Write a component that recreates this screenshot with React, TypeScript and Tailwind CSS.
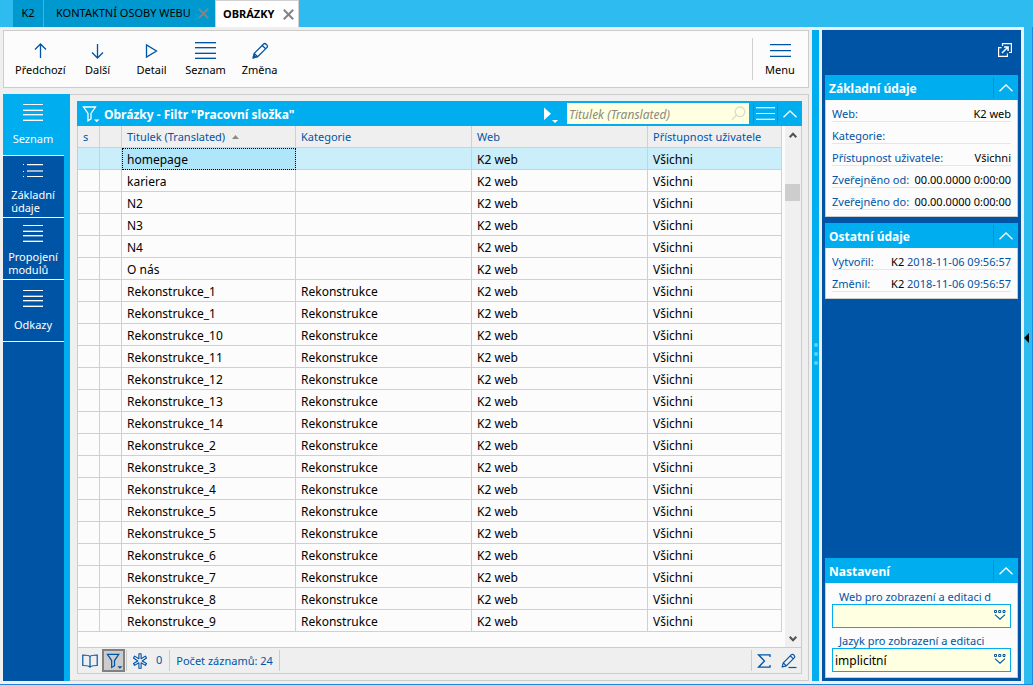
import React from "react";

type Row = { title: string; category: string };

const plainTitles = ["homepage", "kariera", "N2", "N3", "N4", "O nás"];
const projectNumbers = [1, 1, 10, 11, 12, 13, 14, 2, 3, 4, 5, 5, 6, 7, 8, 9];

const rows: Row[] = [
  ...plainTitles.map((title) => ({ title, category: "" })),
  ...projectNumbers.map((n) => ({ title: `Rekonstrukce_${n}`, category: "Rekonstrukce" })),
];

function ArrowUp() {
  return (
    <svg width="21" height="20" viewBox="0 0 21 20" fill="none" stroke="#0054a6" strokeWidth="1.3">
      <path d="M10.5 18V4M5 9.5 10.5 4 16 9.5" />
    </svg>
  );
}

function ArrowDown() {
  return (
    <svg width="21" height="20" viewBox="0 0 21 20" fill="none" stroke="#0054a6" strokeWidth="1.3">
      <path d="M10.5 4v14M5 12.5l5.5 5.5 5.5-5.5" />
    </svg>
  );
}

function Triangle() {
  return (
    <svg width="21" height="20" viewBox="0 0 21 20" fill="none" stroke="#0054a6" strokeWidth="1.3">
      <path d="M5.5 5v12l10-6z" />
    </svg>
  );
}

function FourLines() {
  return (
    <svg width="21" height="20" viewBox="0 0 21 20" stroke="#0054a6" shapeRendering="crispEdges">
      <path d="M0 2.5h21M0 7.5h21M0 13.5h21M0 18.5h21" />
      <path d="M0 3.5h21M0 8.5h21M0 12.5h21M0 17.5h21" strokeOpacity="0.35" />
    </svg>
  );
}

function ThreeLines() {
  return (
    <svg width="21" height="20" viewBox="0 0 21 20" stroke="#0054a6" shapeRendering="crispEdges">
      <path d="M0 4.5h21M0 10.5h21M0 16.5h21" />
      <path d="M0 5.5h21M0 11.5h21M0 15.5h21" strokeOpacity="0.25" />
    </svg>
  );
}

function Pencil() {
  return (
    <svg width="20" height="20" viewBox="0 0 20 20" fill="none" stroke="#0054a6" strokeWidth="1.3" strokeLinejoin="round">
      <path d="M3.2 17.8l1-4.4 9.200-9.200c.8-.8 1.900-.8 2.700 0l.7.7c.8.8.8 1.900 0 2.700L7.600 16.800zM12.200 5.400l3.400 3.400M4.200 13.400l3.400 3.400" />
      <path d="M3.2 17.8l.6-2.600 2 2z" fill="#0054a6" />
    </svg>
  );
}

function EditLine() {
  return (
    <svg width="16" height="16" viewBox="0 0 16 16" fill="none" stroke="#0054a6" strokeWidth="1.2" strokeLinejoin="round">
      <path d="M1.200 14l1.100-4.200 7.900-7.900c.7-.7 1.800-.7 2.500 0l.5.500c.7.700.7 1.800 0 2.500L5.300 12.800 1.200 14zM9.400 2.800l3 3M2.300 9.800l3 3" />
      <path d="M7.500 14.500h8" />
    </svg>
  );
}

function SideLines() {
  return (
    <svg width="20" height="18" viewBox="0 0 20 18" stroke="#fff" shapeRendering="crispEdges">
      <path d="M0 .5h20M0 6.5h20M0 10.5h20M0 16.5h20" />
      <path d="M0 5.5h20M0 11.5h20M0 15.5h20" strokeOpacity="0.35" />
    </svg>
  );
}

function SideBullets() {
  return (
    <svg width="20" height="18" viewBox="0 0 20 18" stroke="#fff" shapeRendering="crispEdges">
      <path d="M0 1.5h1M0 8.5h1M0 13.5h1M4 1.5h16M4 13.5h16" />
      <path d="M4 7.5h16M4 8.5h16" strokeOpacity="0.6" />
      <path d="M4 2.5h16" strokeOpacity="0.25" />
    </svg>
  );
}

function Funnel({ color }: { color: string }) {
  return (
    <svg width="18" height="18" viewBox="0 0 18 18" fill="none" stroke={color} strokeWidth="1.3">
      <path d="M1.5 2h12L9 8.5V14l-3 1.8V8.5z" />
      <path d="M12 14.5h5.5l-2.75 2.8z" fill={color} stroke="none" />
    </svg>
  );
}

function Chevron() {
  return (
    <svg width="14" height="8" viewBox="0 0 14 8" fill="none" stroke="#fff" strokeWidth="1.3">
      <path d="M.5 7.2 7 1l6.5 6.2" />
    </svg>
  );
}

function Cross() {
  return (
    <svg width="11" height="11" viewBox="0 0 11 11" stroke="#848484" strokeWidth="2">
      <path d="M.8.8l9.4 9.4M10.2.8.8 10.2" />
    </svg>
  );
}

function DropGlyph() {
  return (
    <svg width="12" height="10" viewBox="0 0 12 10" fill="none" stroke="#0054a6">
      <path d="M.5.5h2v2h-2zM4.7.5h2v2h-2zM9 .5h2v2H9z" strokeWidth="1" />
      <path d="M1 4.6l5 4.6 5-4.6" strokeWidth="1.1" />
    </svg>
  );
}

function ToolButton({ label, children }: { label: string; children: React.ReactNode }) {
  return (
    <button type="button" className="flex min-w-[52px] flex-col items-center gap-[2px] px-1 pb-px text-[11px] leading-4 text-black">
      {children}
      <span>{label}</span>
    </button>
  );
}

function SideButton({
  label,
  active = false,
  double = false,
  children,
}: {
  label: React.ReactNode;
  active?: boolean;
  double?: boolean;
  children: React.ReactNode;
}) {
  return (
    <button
      type="button"
      className={`flex h-[62px] w-full flex-col items-center border-b border-white pr-px text-[11px] leading-[13px] text-white ${
        double ? "pt-[7px]" : "pt-[10px]"
      } ${active ? "bg-[#00aeef]" : ""}`}
    >
      {children}
      <span className={`text-left ${double ? "mt-[7px]" : "mt-[10px]"}`}>{label}</span>
    </button>
  );
}

function Panel({ title, children }: { title: string; children: React.ReactNode }) {
  return (
    <section>
      <header className="flex h-[25px] items-center bg-[#00aeef] text-white">
        <h2 className="flex-1 pt-[2px] pl-1 text-[12px] leading-5 font-bold">{title}</h2>
        <button type="button" aria-label="Sbalit" className="flex h-[21px] w-[25px] items-center justify-center border-l border-[#0095d2]">
          <Chevron />
        </button>
      </header>
      <div className="border border-t-0 border-[#ccc] bg-[#fcfcfc]">{children}</div>
    </section>
  );
}

function Field({ label, children }: { label: string; children?: React.ReactNode }) {
  return (
    <div className="flex h-[22px] items-end justify-between border-b border-[#e6e6e6] text-[11px] leading-[14px] whitespace-nowrap">
      <dt className="text-[#0054a6]">{label}</dt>
      <dd className="text-black">{children}</dd>
    </div>
  );
}

function Choice({ id, label, value }: { id: string; label: string; value: string }) {
  return (
    <div>
      <label htmlFor={id} className="block h-5 overflow-hidden pt-[6px] pl-[7px] text-[11px] leading-[14px] whitespace-nowrap text-[#0054a6]">
        {label}
      </label>
      <div className="relative">
        <select id={id} className="block h-6 w-full appearance-none border border-[#00aeef] bg-[#ffffe1] pt-px pl-[2px] text-[12px] text-black">
          <option>{value}</option>
        </select>
        <span className="pointer-events-none absolute top-[6px] right-[5px]">
          <DropGlyph />
        </span>
      </div>
    </div>
  );
}

const frame = "h-[22px] overflow-hidden border-r border-b border-[#d0d0d0] pb-0 pl-[5px] text-left whitespace-nowrap";
const headCell = `${frame} pt-0 font-normal`;
const cell = `${frame} pt-[2px]`;

export default function App() {
  return (
    <div className="flex min-h-screen flex-col border-b border-[#1c87dc] bg-[#efefef] font-['Noto_Sans','Open_Sans',sans-serif]">
      <nav className="flex h-[27px] bg-[#2dbbf0] pl-[13px] text-[11px] text-black">
        <button type="button" className="w-[31px] border-r border-[#2dbbf0] bg-[#0099cf]">K2</button>
        <div className="flex items-center bg-[#0099cf] pl-3">
          <button type="button" className="w-[142px] text-left whitespace-nowrap">KONTAKTNÍ OSOBY WEBU</button>
          <button type="button" aria-label="Zavřít Kontaktní osoby webu" className="mr-[6px]"><Cross /></button>
        </div>
        <div className="flex items-center border border-b-0 border-[#d0d0d0] bg-white pl-[7px]">
          <button type="button" className="w-[60px] text-left font-bold whitespace-nowrap">OBRÁZKY</button>
          <button type="button" aria-label="Zavřít Obrázky" className="mr-[4px]"><Cross /></button>
        </div>
      </nav>

      <div className="flex flex-1">
        <main className="flex flex-1 flex-col p-[3px]">
          <div className="flex h-[58px] items-center border border-[#ccc] bg-[#fcfcfc] pr-[2px] pl-[7px]">
            <div className="flex flex-1 gap-[2px]">
              <ToolButton label="Předchozí"><ArrowUp /></ToolButton>
              <ToolButton label="Další"><ArrowDown /></ToolButton>
              <ToolButton label="Detail"><Triangle /></ToolButton>
              <ToolButton label="Seznam"><FourLines /></ToolButton>
              <ToolButton label="Změna"><Pencil /></ToolButton>
            </div>
            <div className="flex h-[42px] items-center border-l border-[#d0d0d0] pl-px">
              <ToolButton label="Menu"><ThreeLines /></ToolButton>
            </div>
          </div>

          <div className="mt-[6px] flex flex-1">
            <aside className="w-[67px] border-r-[6px] border-[#00aeef] bg-[#0054a6]">
              <SideButton label="Seznam" active><SideLines /></SideButton>
              <SideButton label={<>Základní<br />údaje</>} double><SideBullets /></SideButton>
              <SideButton label={<>Propojení<br />modulů</>} double><SideLines /></SideButton>
              <SideButton label="Odkazy"><SideLines /></SideButton>
            </aside>

            <div className="flex flex-1 flex-col border border-l-0 border-[#ccc] pt-[6px] pr-[6px] pb-[6px] pl-[7px]">
              <header className="flex h-[25px] items-center bg-[#00aeef] text-white">
                <button type="button" aria-label="Filtr" className="pl-[5px]"><Funnel color="#fff" /></button>
                <h1 className="flex-1 pt-[2px] pl-1 text-[12px] leading-5 font-bold whitespace-nowrap">Obrázky - Filtr "Pracovní složka"</h1>
                <button type="button" aria-label="Spustit" className="mr-[9px]">
                  <svg width="14" height="18" viewBox="0 0 14 18" fill="#fff"><path d="M0 2.5v12.500L7 8.700zM8 15h6l-3 3z" /></svg>
                </button>
                <div className="relative mr-[4px]">
                  <input aria-label="Hledat" placeholder="Titulek (Translated)" className="block h-[21px] w-[182px] bg-[#ffffe1] pt-px pl-[2px] text-[12px] italic placeholder:text-[#8a8a80]" />
                  <svg className="pointer-events-none absolute top-[3px] right-[3px]" width="15" height="15" viewBox="0 0 15 15" fill="none" stroke="#dcdcc8" strokeWidth="1.3">
                    <circle cx="9" cy="5.8" r="4.8" /><path d="M5.5 9.3 1 13.8" />
                  </svg>
                </div>
                <button type="button" aria-label="Nabídka" className="flex h-[21px] w-[24px] items-center justify-center border-l border-[#0095d2]">
                  <svg width="19" height="13" viewBox="0 0 19 13" stroke="#fff" shapeRendering="crispEdges">
                    <path d="M0 .5h19M0 6.5h19M0 12.5h19" /><path d="M0 1.5h19M0 11.5h19" strokeOpacity="0.3" />
                  </svg>
                </button>
                <button type="button" aria-label="Sbalit" className="flex h-[21px] w-[25px] items-center justify-center border-l border-[#0095d2]"><Chevron /></button>
              </header>

              <div className="flex flex-1 flex-col border border-t-0 border-[#ccc]">
                <div className="flex flex-1 border-b border-[#ccc] bg-[#fcfcfc]">
                  <div className="flex-1 pb-[14px]">
                    <table className="w-full table-fixed border-separate border-spacing-0 text-[12px] leading-4">
                      <colgroup>
                        <col className="w-[22px]" />
                        <col className="w-[22px]" />
                        <col className="w-[174px]" />
                        <col className="w-[176px]" />
                        <col className="w-[176px]" />
                        <col />
                      </colgroup>
                      <thead className="bg-[#efefef] text-[11px] text-[#0054a6]">
                        <tr>
                          <th className={headCell}>s</th>
                          <th className={headCell}></th>
                          <th className={headCell}>
                            <span className="flex items-center gap-[7px]">
                              Titulek (Translated)
                              <svg width="7" height="4" viewBox="0 0 7 4" fill="#8a8a8a"><path d="M0 4 3.5 0 7 4z" /></svg>
                            </span>
                          </th>
                          <th className={headCell}>Kategorie</th>
                          <th className={headCell}>Web</th>
                          <th className={headCell}>Přístupnost uživatele</th>
                        </tr>
                      </thead>
                      <tbody className="text-black">
                        {rows.map((row, i) => (
                          <tr key={i} className={i === 0 ? "bg-[#cbeefb]" : ""}>
                            <td className={cell}></td>
                            <td className={cell}></td>
                            <td className={`${cell} ${i === 0 ? "bg-[#b0e6fa] outline-1 -outline-offset-1 outline-black outline-dotted" : ""}`}>{row.title}</td>
                            <td className={cell}>{row.category}</td>
                            <td className={cell}>K2 web</td>
                            <td className={cell}>Všichni</td>
                          </tr>
                        ))}
                      </tbody>
                    </table>
                  </div>
                  <div className="ml-[3px] flex w-4 flex-col items-center bg-[#f0f0f0] pt-[6px] pb-[5px]">
                    <svg width="8" height="6" viewBox="0 0 8 6" fill="none" stroke="#505050" strokeWidth="2"><path d="M.7 5.2 4 1.8l3.3 3.4" /></svg>
                    <div className="mt-[46px] mr-px h-[17px] w-[15px] bg-[#cdcdcd]" />
                    <svg className="mt-auto" width="8" height="6" viewBox="0 0 8 6" fill="none" stroke="#505050" strokeWidth="2"><path d="M.7.8 4 4.2 7.3.8" /></svg>
                  </div>
                </div>

                <footer className="flex h-[25px] items-center text-[11px] text-[#0054a6]">
                  <button type="button" aria-label="Kniha" className="ml-[4px]">
                    <svg width="16" height="14" viewBox="0 0 16 14" fill="none" stroke="#0054a6" strokeWidth="1.2">
                      <path d="M8 2.5C7 1.2 5 1 .8 1v10.5c4 0 6 .2 7.2 1.5 1.2-1.3 3.2-1.5 7.2-1.5V1C11 1 9 1.2 8 2.5zM8 2.5V13" />
                    </svg>
                  </button>
                  <button type="button" aria-label="Filtr" className="ml-[4px] flex h-[23px] w-[23px] items-center justify-center border-2 border-[#808080] bg-[#ccc] pl-[2px]"><Funnel color="#0054a6" /></button>
                  <div className="ml-[1px] flex h-[21px] items-center border-l border-[#ccc] pl-[5px]">
                    <svg width="16" height="16" viewBox="0 0 16 16" fill="none" stroke="#0054a6" strokeWidth="1.1" strokeLinejoin="round">
                      <path d="M6.9.8h2.2v4.9l4.3-2.6 1.1 1.9L10.2 8l4.3 2.5-1.1 1.9-4.3-2.6v5.4H6.9V9.8l-4.3 2.6-1.1-1.9L5.8 8 1.5 5l1.1-1.9 4.3 2.6z" />
                    </svg>
                    <span className="pl-[8px]">0</span>
                  </div>
                  <div className="ml-[7px] flex h-[21px] items-center border-x border-[#ccc] px-[6px] pt-px whitespace-nowrap">Počet záznamů: 24</div>
                  <div className="ml-auto flex h-[21px] items-center border-l border-[#ccc] pr-[4px] pl-[5px]">
                    <button type="button" aria-label="Součet">
                      <svg width="14" height="14" viewBox="0 0 14 14" fill="none" stroke="#0054a6" strokeWidth="1.3"><path d="M13 3V.8H1.5L7.5 7l-6 6.2H13V11" /></svg>
                    </button>
                    <button type="button" aria-label="Upravit" className="ml-[10px]"><EditLine /></button>
                  </div>
                </footer>
              </div>
            </div>
          </div>
        </main>

        <div className="my-[3px] flex w-[7px] flex-col items-center justify-center gap-[5px] bg-[#00aeef] pb-[3px]">
          <i className="size-1 rounded-full bg-[#5fd0f8]" />
          <i className="size-1 rounded-full bg-[#5fd0f8]" />
          <i className="size-1 rounded-full bg-[#5fd0f8]" />
        </div>

        <aside className="m-[3px] flex w-[199px] flex-col gap-[6px] bg-[#0054a6] px-[3px] pb-[3px]">
          <div className="flex h-[39px] items-center justify-end pt-px pr-[6px]">
            <button type="button" aria-label="Otevřít v novém okně">
              <svg width="14" height="14" viewBox="0 0 14 14" fill="none" stroke="#fff" strokeWidth="1.2">
                <path d="M4.5 3V.6h8.9v8.9H11M3.5 4.6H.6v8.8h8.8v-2.9" />
                <path d="M4 10l5.8-5.8M6 3.9h4.1V8" strokeWidth="1.5" />
              </svg>
            </button>
          </div>
          <Panel title="Základní údaje">
            <dl className="px-[6px] pb-[6px]">
              <Field label="Web:">K2 web</Field>
              <Field label="Kategorie:" />
              <Field label="Přístupnost uživatele:">Všichni</Field>
              <Field label="Zveřejněno od:">00.00.0000 0:00:00</Field>
              <Field label="Zveřejněno do:">00.00.0000 0:00:00</Field>
            </dl>
          </Panel>
          <Panel title="Ostatní údaje">
            <dl className="px-[6px] pb-[6px]">
              <Field label="Vytvořil:">K2 <span className="text-[#0054a6]">2018-11-06 09:56:57</span></Field>
              <Field label="Změnil:">K2 <span className="text-[#0054a6]">2018-11-06 09:56:57</span></Field>
            </dl>
          </Panel>
          <div className="mt-auto">
            <Panel title="Nastavení">
              <div className="px-[6px] pt-px pb-[5px]">
                <Choice id="web" label="Web pro zobrazení a editaci d" value="" />
                <Choice id="lang" label="Jazyk pro zobrazení a editaci" value="implicitní" />
              </div>
            </Panel>
          </div>
        </aside>

        <div className="flex w-[9px] items-center border-r border-[#1c87dc] bg-[#2dbbf0] pb-9">
          <svg width="5" height="10" viewBox="0 0 5 10"><path d="M5 0v10L0 5z" /></svg>
        </div>
      </div>
    </div>
  );
}
